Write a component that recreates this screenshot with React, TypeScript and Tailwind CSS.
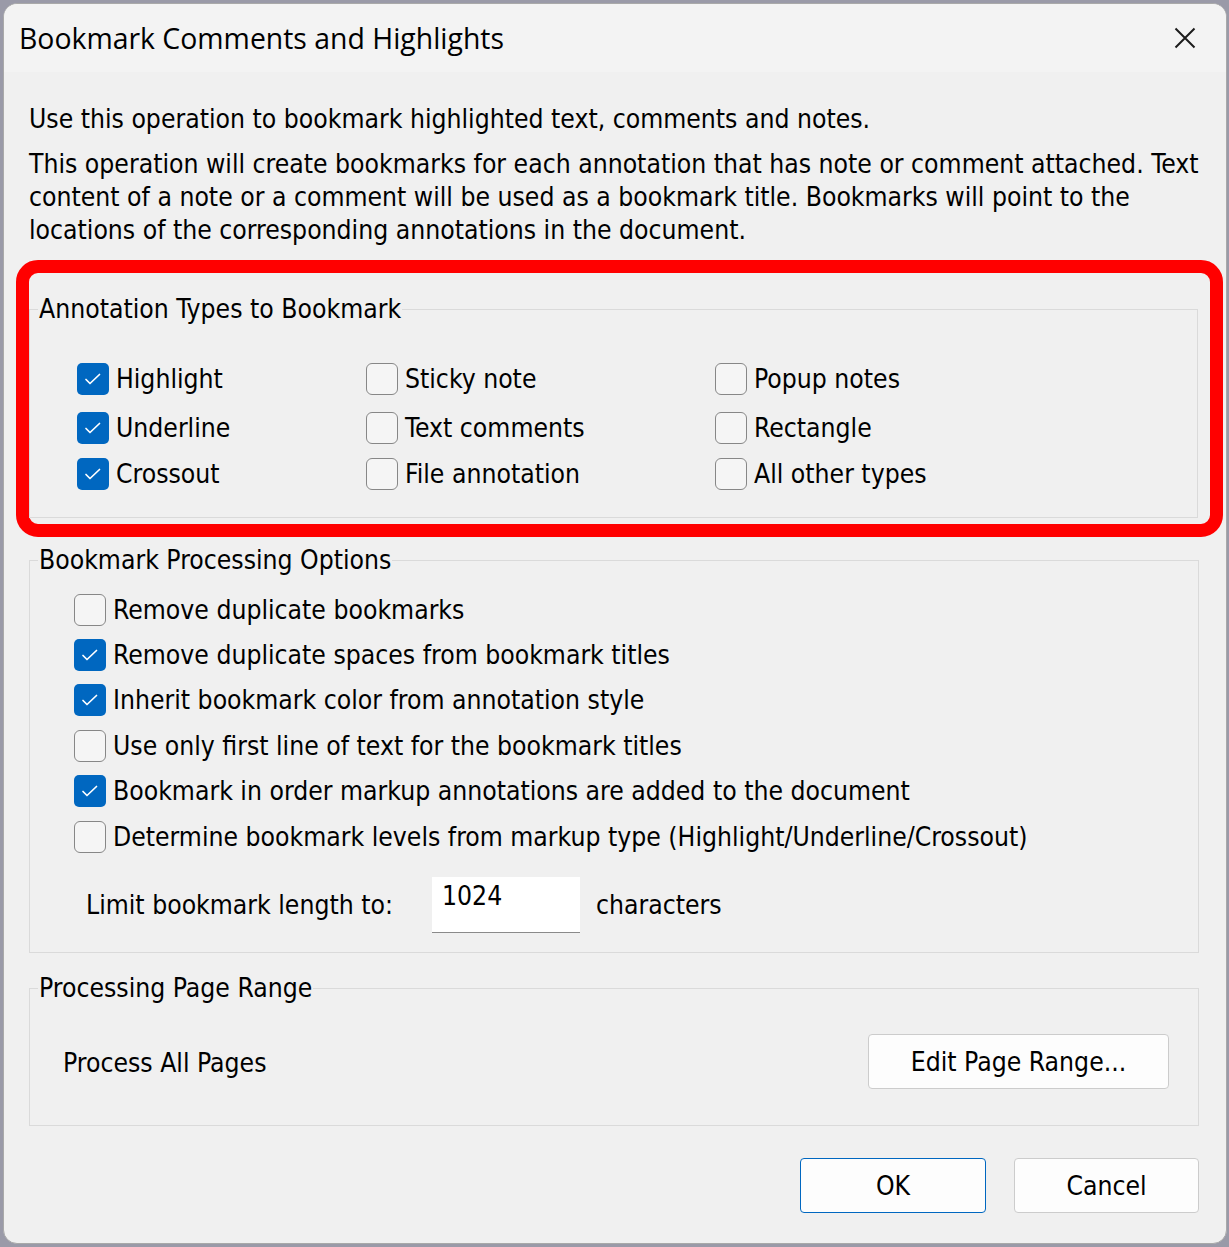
import React from "react";

const BODY = "font-['DejaVu_Sans_Condensed','DejaVu_Sans',sans-serif]";

function Box({ checked }: { checked: boolean }) {
  return checked ? (
    <span className="w-[32px] h-[32px] rounded-[5px] bg-[#0067c0] flex items-center justify-center shrink-0">
      <svg width="32" height="32" viewBox="0 0 32 32">
        <path d="M9 16.5 L13 20.5 L22.5 11.5" fill="none" stroke="#ffffff" strokeWidth="1.7" strokeLinecap="round" strokeLinejoin="round" />
      </svg>
    </span>
  ) : (
    <span className="w-[32px] h-[32px] rounded-[6px] border-[1.5px] border-[#878787] bg-[#f5f5f5] shrink-0" />
  );
}

function Check({ checked, label, w }: { checked: boolean; label: string; w?: string }) {
  return (
    <div className={`flex items-center gap-[7px] ${w ?? ""}`}>
      <Box checked={checked} />
      <span className="text-[26.3px] leading-[32px] text-black whitespace-nowrap">{label}</span>
    </div>
  );
}

function Group({ title, children }: { title: string; children: React.ReactNode }) {
  return (
    <fieldset className="border border-[#dadada] m-0 p-0 min-w-0">
      <legend className="ml-[8px] px-[1px] text-[26.3px] leading-[32px] text-black">{title}</legend>
      {children}
    </fieldset>
  );
}

const annot: [boolean, string, boolean, string, boolean, string][] = [
  [true, "Highlight", false, "Sticky note", false, "Popup notes"],
  [true, "Underline", false, "Text comments", false, "Rectangle"],
  [true, "Crossout", false, "File annotation", false, "All other types"],
];

const opts: [boolean, string][] = [
  [false, "Remove duplicate bookmarks"],
  [true, "Remove duplicate spaces from bookmark titles"],
  [true, "Inherit bookmark color from annotation style"],
  [false, "Use only first line of text for the bookmark titles"],
  [true, "Bookmark in order markup annotations are added to the document"],
  [false, "Determine bookmark levels from markup type (Highlight/Underline/Crossout)"],
];

export default function App() {
  return (
    <div className="w-[1229px] h-[1247px] bg-[#9a9aa8] pt-[3px] pl-[3px] overflow-hidden">
      <div className="w-[1224px] h-[1241px] rounded-[14px] border border-[#a9a9a9] bg-[#f0f0f0] overflow-hidden flex flex-col">
        {/* Title bar */}
        <div className="h-[68px] bg-[#f3f3f3] flex items-center justify-between pl-[15px] pr-[30px] shrink-0">
          <span className="font-['Open_Sans',sans-serif] text-[28.4px] text-black leading-none">
            Bookmark Comments and Highlights
          </span>
          <svg width="22" height="22" viewBox="0 0 22 22">
            <path d="M1.5 1.5 L20.5 20.5 M20.5 1.5 L1.5 20.5" stroke="#1b1b1b" strokeWidth="2" fill="none" />
          </svg>
        </div>

        {/* Body */}
        <div className={`${BODY} pl-[25px] pr-[27px] flex flex-col text-black`}>
          <p className="mt-[31px] text-[26.3px] leading-[33px]">
            Use this operation to bookmark highlighted text, comments and notes.
          </p>
          <p className="mt-[12px] text-[26.3px] leading-[33px]">
            This operation will create bookmarks for each annotation that has note or comment attached. Text content of a note or a comment will be used as a bookmark title. Bookmarks will point to the locations of the corresponding annotations in the document.
          </p>

          {/* Red highlight frame */}
          <div className="mt-[13px] -ml-[13px] -mr-[24px] border-[13px] border-[#ff0000] rounded-[22px] pt-[20px] pr-[12px] pb-[6px]">
            <Group title="Annotation Types to Bookmark">
              <div className="pl-[47px] pt-[31px] pb-[20px] flex flex-col">
                {annot.map((r, i) => (
                  <div key={i} className={`flex items-center ${i === 0 ? "h-[49px] pb-[3px]" : "h-[46px]"}`}>
                    <Check checked={r[0]} label={r[1]} w="w-[289px]" />
                    <Check checked={r[2]} label={r[3]} w="w-[349px]" />
                    <Check checked={r[4]} label={r[5]} />
                  </div>
                ))}
              </div>
            </Group>
          </div>

          <div className="mt-[7px]">
            <Group title="Bookmark Processing Options">
              <div className="pl-[44px] pt-[11px] flex flex-col">
                {opts.map((o, i) => (
                  <div key={i} className="h-[45.4px] flex items-center">
                    <Check checked={o[0]} label={o[1]} />
                  </div>
                ))}
                <div className="flex items-center mt-[18px] mb-[19px] pl-[12px]">
                  <span className="text-[26.3px] leading-[32px] w-[346px]">Limit bookmark length to:</span>
                  <div className="w-[148px] h-[56px] bg-white border-b border-[#8a8a8a] pl-[10px] pt-[3px] text-[26.3px] leading-[32px]">
                    1024
                  </div>
                  <span className="ml-[16px] text-[26.3px] leading-[32px]">characters</span>
                </div>
              </div>
            </Group>
          </div>

          <div className="mt-[19px]">
            <Group title="Processing Page Range">
              <div className="pl-[33px] pr-[29px] pt-[30px] pb-[36px] flex items-center justify-between">
                <span className="text-[26.3px] leading-[32px] pt-[3px]">Process All Pages</span>
                <button className="w-[301px] h-[55px] bg-[#fdfdfd] border border-[#cccccc] rounded-[4px] text-[26.3px] leading-[32px] text-black">
                  Edit Page Range...
                </button>
              </div>
            </Group>
          </div>

          <div className="mt-[32px] flex justify-end gap-[28px]">
            <button className="w-[186px] h-[55px] bg-[#fdfdfd] border border-[#0067c0] rounded-[4px] text-[26.3px] leading-[32px] text-black">
              OK
            </button>
            <button className="w-[185px] h-[55px] bg-[#fdfdfd] border border-[#cccccc] rounded-[4px] text-[26.3px] leading-[32px] text-black">
              Cancel
            </button>
          </div>
        </div>
      </div>
    </div>
  );
}
